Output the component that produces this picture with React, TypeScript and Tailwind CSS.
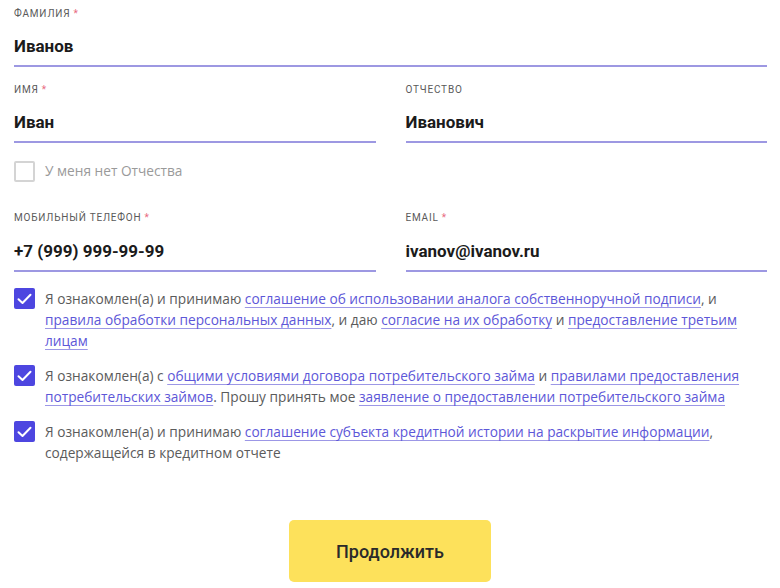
import React from "react";

const font = { fontFamily: "Roboto, 'Open Sans', Arial, sans-serif" };
const body = { fontFamily: "'Open Sans', Roboto, Arial, sans-serif" };

function Label({ text, req }: { text: string; req?: boolean }) {
  return (
    <div className="h-[14px] text-[10px] leading-[14px] uppercase tracking-[0.8px] text-[#5a5a5a]">
      {text}
      {req && <span className="ml-[3px] text-[#e86a80]">*</span>}
    </div>
  );
}

function Value({ children, pt }: { children: React.ReactNode; pt: string }) {
  return (
    <div className={`${pt} pb-[8px] border-b-2 border-[#9d98e2] text-[17px] leading-[22px] font-bold text-[#1b1b1b]`}>
      {children}
    </div>
  );
}

function Check() {
  return (
    <div className="w-[21px] h-[21px] shrink-0 rounded-[2px] bg-[#4d46e0] flex items-center justify-center">
      <svg width="15" height="12" viewBox="0 0 15 12" fill="none">
        <path d="M1.5 6.2 L5.5 10 L13.5 1.8" stroke="white" strokeWidth="2" strokeLinecap="round" strokeLinejoin="round" />
      </svg>
    </div>
  );
}

function L({ children }: { children: React.ReactNode }) {
  return (
    <a className="text-[#5d57d8] underline decoration-[#9c97e6] underline-offset-[3px]" href="#">
      {children}
    </a>
  );
}

function Agree({ children }: { children: React.ReactNode }) {
  return (
    <div className="flex gap-[10px]">
      <Check />
      <div className="text-[13.7px] leading-[21px] text-[#5b5b5b] pr-[14px]" style={body}>
        {children}
      </div>
    </div>
  );
}

export default function App() {
  return (
    <div className="w-[780px] h-[588px] bg-white pl-[14px] pr-[13px] pt-[7px]" style={font}>
      <div className="flex flex-col">
        <Label text="Фамилия" req />
        <Value pt="pt-[14px]">Иванов</Value>
      </div>
      <div className="mt-[16px] grid grid-cols-2 gap-x-[30px]">
        <div className="flex flex-col">
          <Label text="Имя" req />
          <Value pt="pt-[14px]">Иван</Value>
        </div>
        <div className="flex flex-col">
          <Label text="Отчество" />
          <Value pt="pt-[14px]">Иванович</Value>
        </div>
      </div>
      <div className="mt-[18px] flex items-center gap-[10px]">
        <div className="w-[21px] h-[21px] rounded-[2px] border-2 border-[#d4d4d4]" />
        <span className="text-[13.7px] text-[#9a9a9a]" style={body}>
          У меня нет Отчества
        </span>
      </div>
      <div className="mt-[29px] grid grid-cols-2 gap-x-[30px]">
        <div className="flex flex-col">
          <Label text="Мобильный телефон" req />
          <Value pt="pt-[15px]">+7 (999) 999-99-99</Value>
        </div>
        <div className="flex flex-col">
          <Label text="Email" req />
          <Value pt="pt-[15px]">ivanov@ivanov.ru</Value>
        </div>
      </div>
      <div className="mt-[16px] flex flex-col gap-[14px]">
        <Agree>
          Я ознакомлен(а) и принимаю <L>соглашение об использовании аналога собственноручной подписи</L>, и{" "}
          <L>правила обработки персональных данных</L>, и даю <L>согласие на их обработку</L> и{" "}
          <L>предоставление третьим лицам</L>
        </Agree>
        <Agree>
          Я ознакомлен(а) с <L>общими условиями договора потребительского займа</L> и{" "}
          <L>правилами предоставления потребительских займов</L>. Прошу принять мое{" "}
          <L>заявление о предоставлении потребительского займа</L>
        </Agree>
        <Agree>
          Я ознакомлен(а) и принимаю <L>соглашение субъекта кредитной истории на раскрытие информации</L>,
          содержащейся в кредитном отчете
        </Agree>
      </div>
      <div className="mt-[57px] flex justify-center pr-[1px]">
        <button className="w-[202px] h-[62px] rounded-[5px] bg-[#fde15b] text-[18px] font-medium text-[#2a2a2a]">
          Продолжить
        </button>
      </div>
    </div>
  );
}
